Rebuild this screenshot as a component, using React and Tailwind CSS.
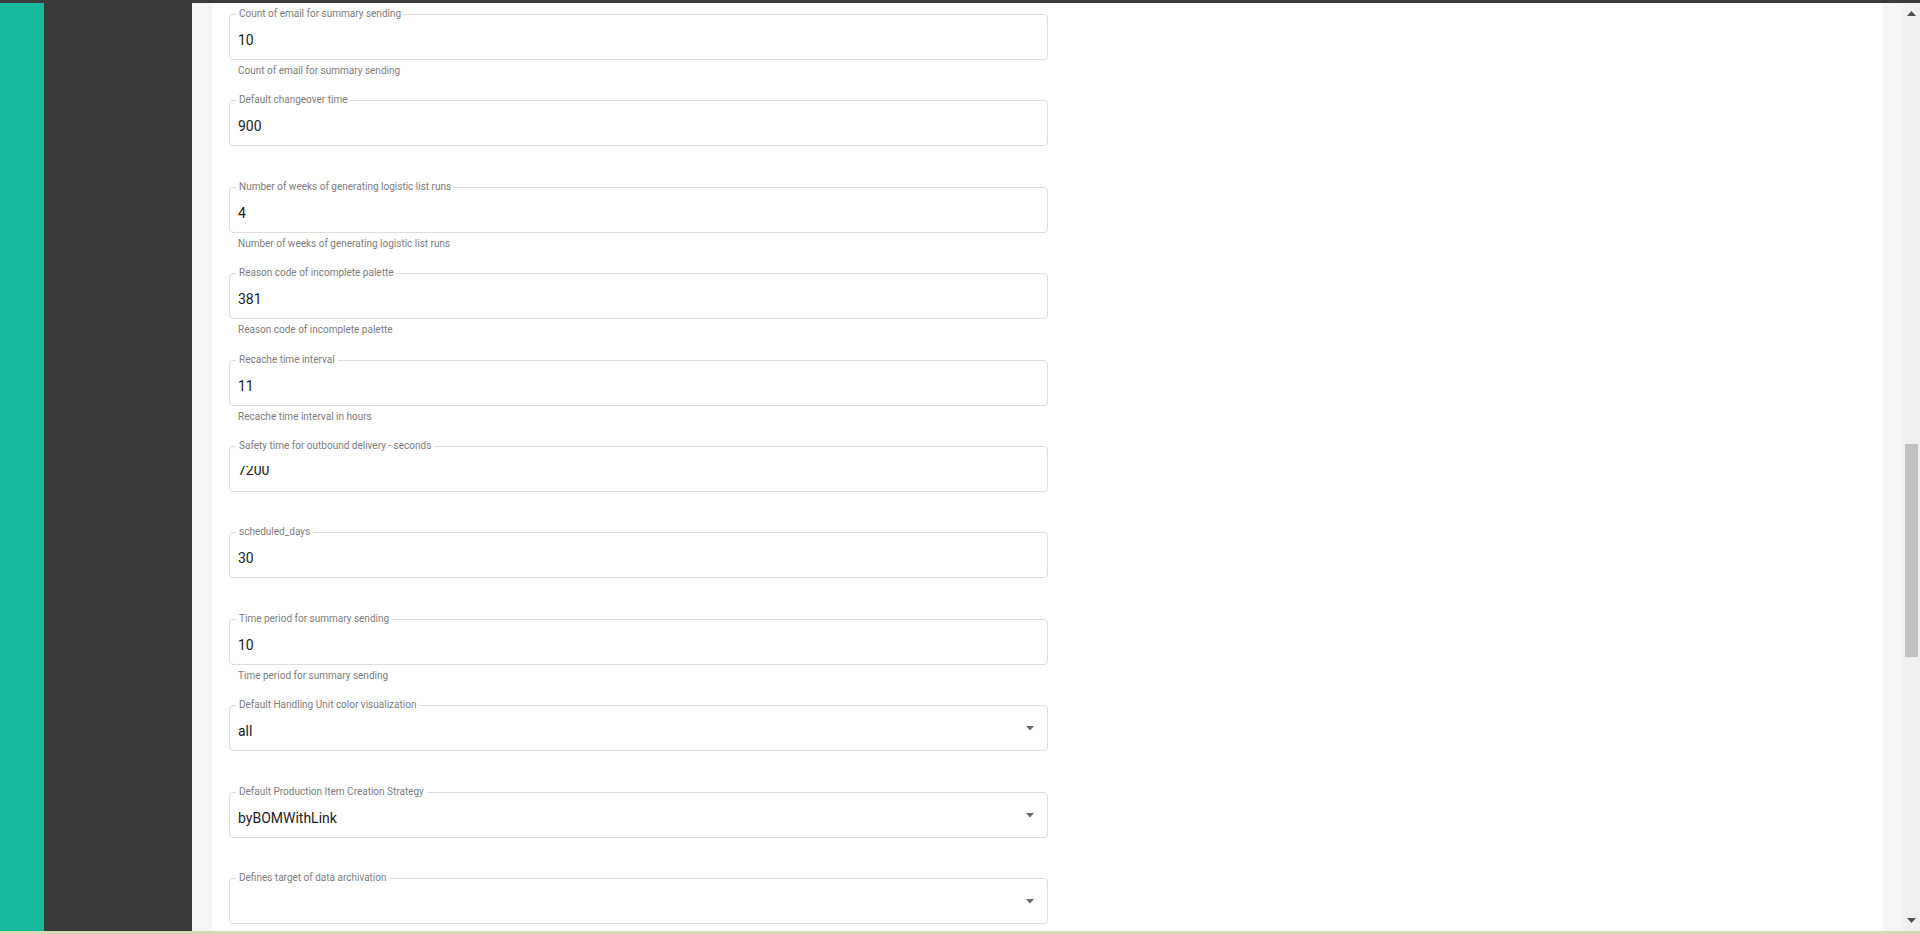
import { useState } from "react"

const settings = [
    { label: "Count of email for summary sending", value: "10", help: "Count of email for summary sending" },
    { label: "Default changeover time", value: "900" },
    { label: "Number of weeks of generating logistic list runs", value: "4", help: "Number of weeks of generating logistic list runs" },
    { label: "Reason code of incomplete palette", value: "381", help: "Reason code of incomplete palette" },
    { label: "Recache time interval", value: "11", help: "Recache time interval in hours" },
    { label: "Safety time for outbound delivery - seconds", value: "7200", clipped: true },
    { label: "scheduled_days", value: "30" },
    { label: "Time period for summary sending", value: "10", help: "Time period for summary sending" },
    { label: "Default Handling Unit color visualization", value: "all", select: true },
    { label: "Default Production Item Creation Strategy", value: "byBOMWithLink", select: true },
    { label: "Defines target of data archivation", value: "", select: true },
]

const labelFont = "font-['Liberation_Sans_Narrow',Roboto,sans-serif] text-[10px] leading-[12px] text-[#7d7d7d]"

function Field({ item }) {
    return (
        <div className="h-[86.4px] shrink-0">
            <div className="relative h-[46px] w-[819px] rounded-[4px] border border-[#dedede] px-[8px]">
                <span className={"absolute left-[6px] top-[-7px] bg-white px-[3px] whitespace-nowrap " + labelFont}>
                    {item.label}
                </span>
                {item.clipped ? (
                    <div className="mt-[19px] h-[9px] overflow-hidden">
                        <span className="-mt-[6px] block font-['Roboto',sans-serif] text-[14px] leading-[20px] text-[#1d1d1d]">
                            {item.value}
                        </span>
                    </div>
                ) : (
                    <span className="block pt-[15px] font-['Roboto',sans-serif] text-[14px] leading-[20px] text-[#1d1d1d]">
                        {item.value}
                    </span>
                )}
                {item.select && (
                    <svg className="absolute right-[13px] top-[20px]" width="8" height="5" viewBox="0 0 8 5">
                        <path d="M0 0h8L4 4.5z" fill="#6a6a6a" />
                    </svg>
                )}
            </div>
            {item.help && (
                <div className={"mt-[5px] pl-[9px] " + labelFont}>{item.help}</div>
            )}
        </div>
    )
}

export default function App() {
    const [items] = useState(settings)

    return (
        <div className="flex h-[934px] w-full flex-col overflow-hidden bg-white">
            <div className="h-[3px] shrink-0 bg-[#3b3b3b]" />
            <div className="flex min-h-0 flex-1">
                <aside className="w-[44px] shrink-0 bg-[#18b99b]" />
                <aside className="w-[148px] shrink-0 bg-[#3a3a3a]" />
                <main className="flex min-w-0 flex-1 bg-[#f5f5f5] px-[20px]">
                    <section className="flex flex-1 flex-col overflow-hidden bg-white pl-[17px] pt-[11px]">
                        {items.map((item, i) => (
                            <Field key={i} item={item} />
                        ))}
                    </section>
                </main>
                <div className="flex w-[17px] shrink-0 flex-col items-center bg-[#f0f0f0]">
                    <svg className="mt-[8px]" width="9" height="5" viewBox="0 0 9 5">
                        <path d="M4.5 0L9 5H0z" fill="#505050" />
                    </svg>
                    <div className="mt-[428px] h-[213px] w-[13px] bg-[#c1c1c1]" />
                    <div className="flex-1" />
                    <svg className="mb-[8px]" width="9" height="5" viewBox="0 0 9 5">
                        <path d="M0 0h9L4.5 5z" fill="#505050" />
                    </svg>
                </div>
            </div>
            <div className="h-[3px] shrink-0 bg-[#d3d8b5]" />
        </div>
    )
}
